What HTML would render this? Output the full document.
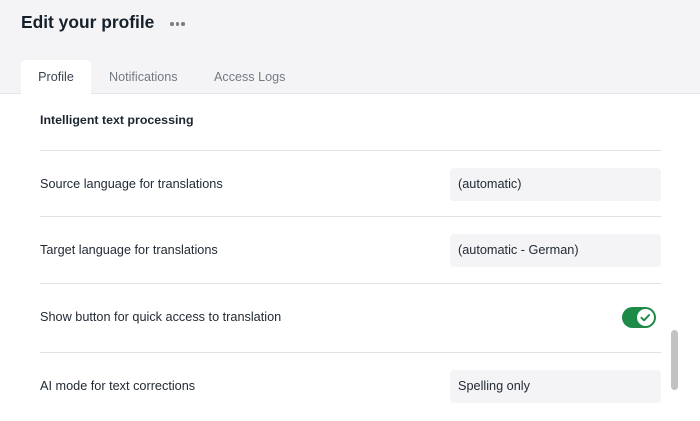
<!DOCTYPE html>
<html><head><style>
body{margin:0;width:700px;height:421px;overflow:hidden;background:#fff;font-family:"Liberation Sans",sans-serif;color:#1c2630;position:relative}
.hdr{position:absolute;left:0;top:0;width:700px;height:93px;background:#f4f4f6;border-bottom:1px solid #e6e6ea}
.t{position:absolute;left:21px;top:12px;font-size:17.4px;font-weight:bold;color:#15202b}
.dots{position:absolute;left:170px;top:22px;display:flex;gap:2px}
.dots i{width:3.5px;height:3.5px;border-radius:50%;background:#7a7f87}
.tab{position:absolute;top:60px;height:34px;line-height:34px;font-size:12.6px;color:#737a83}
.tab.a{background:#fff;color:#3a4450;border-radius:4px 4px 0 0;left:21px;width:70px;text-align:center}
.sec{position:absolute;left:40px;top:113px;font-size:12.4px;font-weight:bold}
.hr{position:absolute;left:40px;width:621px;height:1px;background:#e2e2e6}
.lbl{position:absolute;left:40px;font-size:12.7px;color:#222b35}
.inp{position:absolute;left:450px;width:211px;height:33px;background:#f4f4f6;border-radius:4px;font-size:12.7px;line-height:33px;text-indent:8px;color:#222b35}
.tg{position:absolute;left:622px;top:307px;width:34px;height:21px;border-radius:11px;background:#1e8a47}
.kn{position:absolute;right:2px;top:2px;width:17px;height:17px;border-radius:50%;background:#fff}
.sb{position:absolute;left:671px;top:330px;width:7px;height:60px;border-radius:4px;background:#c2c2c2}
</style></head><body>
<div class="hdr"></div>
<div class="t">Edit your profile</div>
<div class="dots"><i></i><i></i><i></i></div>
<div class="tab a">Profile</div>
<div class="tab" style="left:109px">Notifications</div>
<div class="tab" style="left:214px">Access Logs</div>
<div class="sec">Intelligent text processing</div>
<div class="hr" style="top:150px"></div>
<div class="lbl" style="top:177px">Source language for translations</div>
<div class="inp" style="top:168px">(automatic)</div>
<div class="hr" style="top:216px"></div>
<div class="lbl" style="top:243px">Target language for translations</div>
<div class="inp" style="top:234px">(automatic - German)</div>
<div class="hr" style="top:283px"></div>
<div class="lbl" style="top:310px">Show button for quick access to translation</div>
<div class="tg"><div class="kn"><svg width="17" height="17" viewBox="0 0 17 17"><path d="M4.5 8.8l2.6 2.5 5-5.3" fill="none" stroke="#1e8a47" stroke-width="2" stroke-linecap="round" stroke-linejoin="round"/></svg></div></div>
<div class="hr" style="top:352px"></div>
<div class="lbl" style="top:379px">AI mode for text corrections</div>
<div class="inp" style="top:370px">Spelling only</div>
<div class="sb"></div>
</body></html>
